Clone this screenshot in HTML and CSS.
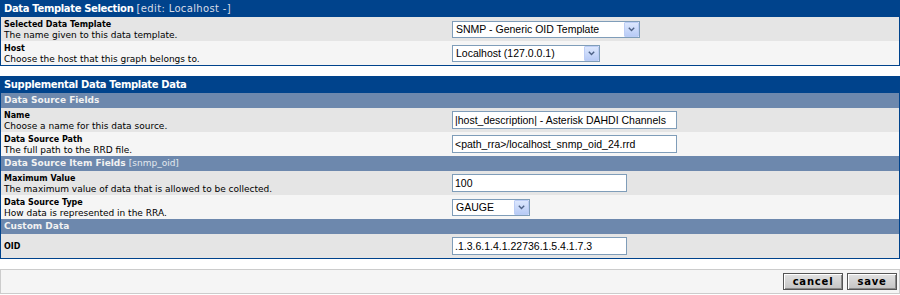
FILE: index.html
```html
<!DOCTYPE html>
<html lang="en">
<head>
  <meta charset="UTF-8">
  <title>Data Sources - Edit</title>
  <link rel="stylesheet" href="styles.css">
</head>
<body>

  <!-- Template selection -->
  <div class="panel">
    <div class="panel-title">Data Template Selection <span class="title-note">[edit: Localhost -]</span></div>

    <div class="row row-dark">
      <div class="field-label">
        <span class="label">Selected Data Template</span>
        <span class="desc">The name given to this data template.</span>
      </div>
      <div class="field-input">
        <div class="select select-template">
          <span class="select-text">SNMP - Generic OID Template</span>
          <span class="select-btn"><svg width="7" height="5" viewBox="0 0 7 5"><path d="M0.8 0.8L3.5 3.5L6.2 0.8" fill="none" stroke="#4d6185" stroke-width="1.4"/></svg></span>
        </div>
      </div>
    </div>

    <div class="row row-light">
      <div class="field-label">
        <span class="label">Host</span>
        <span class="desc">Choose the host that this graph belongs to.</span>
      </div>
      <div class="field-input">
        <div class="select select-host">
          <span class="select-text">Localhost (127.0.0.1)</span>
          <span class="select-btn"><svg width="7" height="5" viewBox="0 0 7 5"><path d="M0.8 0.8L3.5 3.5L6.2 0.8" fill="none" stroke="#4d6185" stroke-width="1.4"/></svg></span>
        </div>
      </div>
    </div>
  </div>

  <!-- Supplemental data -->
  <div class="panel">
    <div class="panel-title">Supplemental Data Template Data</div>

    <div class="subheader">Data Source Fields</div>

    <div class="row row-dark">
      <div class="field-label">
        <span class="label">Name</span>
        <span class="desc">Choose a name for this data source.</span>
      </div>
      <div class="field-input">
        <input type="text" class="text-wide" value="|host_description| - Asterisk DAHDI Channels">
      </div>
    </div>

    <div class="row row-light">
      <div class="field-label">
        <span class="label">Data Source Path</span>
        <span class="desc">The full path to the RRD file.</span>
      </div>
      <div class="field-input">
        <input type="text" class="text-wide" value="<path_rra>/localhost_snmp_oid_24.rrd">
      </div>
    </div>

    <div class="subheader">Data Source Item Fields <span class="sub-note">[snmp_oid]</span></div>

    <div class="row row-dark">
      <div class="field-label">
        <span class="label">Maximum Value</span>
        <span class="desc">The maximum value of data that is allowed to be collected.</span>
      </div>
      <div class="field-input">
        <input type="text" class="text-short" value="100">
      </div>
    </div>

    <div class="row row-light">
      <div class="field-label">
        <span class="label">Data Source Type</span>
        <span class="desc">How data is represented in the RRA.</span>
      </div>
      <div class="field-input">
        <div class="select select-type">
          <span class="select-text">GAUGE</span>
          <span class="select-btn"><svg width="7" height="5" viewBox="0 0 7 5"><path d="M0.8 0.8L3.5 3.5L6.2 0.8" fill="none" stroke="#4d6185" stroke-width="1.4"/></svg></span>
        </div>
      </div>
    </div>

    <div class="subheader">Custom Data</div>

    <div class="row row-dark">
      <div class="field-label">
        <span class="label">OID</span>
      </div>
      <div class="field-input">
        <input type="text" class="text-short" value=".1.3.6.1.4.1.22736.1.5.4.1.7.3">
      </div>
    </div>
  </div>

  <div class="save-bar">
    <button type="button" class="btn btn-cancel">cancel</button>
    <button type="submit" class="btn btn-save">save</button>
  </div>

</body>
</html>
```

FILE: styles.css
```css
body {
  margin: 0;
  background-color: #ffffff;
  font-family: "DejaVu Sans", Verdana, sans-serif;
  color: #000000;
}

.panel {
  border: 1px solid #00438c;
  margin-bottom: 10px;
}

.panel-title {
  background-color: #00438c;
  color: #ffffff;
  font-size: 10px;
  font-weight: bold;
  letter-spacing: -0.35px;
  line-height: 16px;
  height: 16px;
  padding: 0 3px;
}

.title-note {
  font-weight: normal;
  color: #d8dde8;
  letter-spacing: 0.35px;
}

.subheader {
  background-color: #6d88ad;
  color: #f2f2f2;
  font-size: 9px;
  font-weight: bold;
  line-height: 15px;
  height: 15px;
  padding: 0 3px;
}

.sub-note {
  font-weight: normal;
  color: #e3e8ef;
}

/* Form rows */
.row {
  display: grid;
  grid-template-columns: 50% 50%;
  align-items: center;
  height: 24px;
}

.row-dark {
  background-color: #e5e5e5;
}

.row-light {
  background-color: #f5f5f5;
}

.field-label {
  padding: 1px 3px 0;
}

.label {
  display: block;
  font-size: 8px;
  font-weight: bold;
  line-height: 11px;
}

.desc {
  display: block;
  font-size: 9px;
  line-height: 11px;
}

.field-input {
  padding-left: 2px;
  display: flex;
  align-items: center;
}

/* Inputs */
input[type="text"] {
  box-sizing: border-box;
  height: 18px;
  border: 1px solid #7f9db9;
  background-color: #ffffff;
  font-family: "Liberation Sans", Arial, sans-serif;
  font-size: 10.5px;
  padding: 0 2px;
  margin: 0;
  color: #000000;
}

.text-wide {
  width: 225px;
}

.text-short {
  width: 175px;
}

/* Drop down boxes */
.select {
  box-sizing: border-box;
  display: inline-flex;
  align-items: center;
  height: 17px;
  border: 1px solid #7f9db9;
  background-color: #ffffff;
  font-family: "Liberation Sans", Arial, sans-serif;
  font-size: 10.5px;
}

.select-template {
  width: 188px;
}

.select-host {
  width: 148px;
}

.select-type {
  width: 78px;
}

.select-text {
  flex: 1;
  padding-left: 3px;
  white-space: nowrap;
  overflow: hidden;
}

.select-btn {
  box-sizing: border-box;
  width: 15px;
  height: 15px;
  border: 1px solid #bccdf5;
  border-radius: 1px;
  background: linear-gradient(#dce7fd, #b8cbf6);
  display: flex;
  align-items: center;
  justify-content: center;
}

/* Save bar */
.save-bar {
  display: flex;
  justify-content: flex-end;
  gap: 4px;
  border: 1px solid #cccccc;
  background-color: #f5f5f5;
  padding: 3px 2px;
}

.btn {
  box-sizing: border-box;
  height: 17px;
  margin: 0;
  padding: 0;
  border: 1px solid #555555;
  box-shadow: inset 1px 1px 0 #ffffff, inset -1px -1px 0 #8a8a8a;
  background: linear-gradient(#e2e2e2, #c4c4c4);
  font-family: "DejaVu Sans", Verdana, sans-serif;
  font-size: 10px;
  font-weight: bold;
  letter-spacing: 0.8px;
  color: #000000;
  cursor: pointer;
}

.btn-cancel {
  width: 60px;
}

.btn-save {
  width: 50px;
}
```
